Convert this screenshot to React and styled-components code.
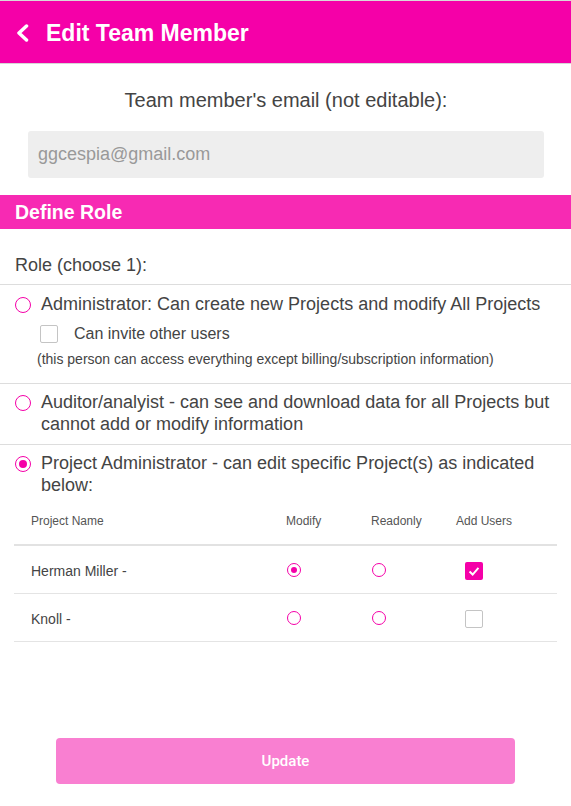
import React, { useState } from "react";
import styled, { createGlobalStyle } from "styled-components";

const GlobalStyle = createGlobalStyle`
  body {
    margin: 0;
    background: #fff;
    font-family: "Liberation Sans", Arial, sans-serif;
    color: #444;
  }
`;

const PINK = "#f500a8";

const projects = [
  { name: "Herman Miller -", access: "modify", addUsers: true },
  { name: "Knoll -", access: "none", addUsers: false }
];

export default function App() {
  const [role] = useState("project");

  return (
    <>
      <GlobalStyle />
      <Page>
        <TopEdge />
        <Header>
          <BackIcon viewBox="0 0 13 18">
            <path d="M10.5 2 L3 9 L10.5 16" />
          </BackIcon>
          <Title>Edit Team Member</Title>
        </Header>

        <EmailSection>
          <EmailLabel>Team member's email (not editable):</EmailLabel>
          <EmailBox>ggcespia@gmail.com</EmailBox>
        </EmailSection>

        <SectionBar>Define Role</SectionBar>

        <RoleIntro>Role (choose 1):</RoleIntro>

        <RoleBlock top="8px" bottom="16px">
          <RoleRow>
            <Radio checked={role === "admin"} />
            <RoleText>
              Administrator: Can create new Projects and modify All Projects
            </RoleText>
          </RoleRow>
          <InviteRow>
            <Checkbox />
            <span>Can invite other users</span>
          </InviteRow>
          <Note>
            (this person can access everything except billing/subscription
            information)
          </Note>
        </RoleBlock>

        <RoleBlock top="7px" bottom="9px">
          <RoleRow>
            <Radio checked={role === "auditor"} />
            <RoleText>
              Auditor/analyist - can see and download data for all Projects but
              cannot add or modify information
            </RoleText>
          </RoleRow>
        </RoleBlock>

        <RoleBlock top="7px" last>
          <RoleRow>
            <Radio checked={role === "project"} />
            <RoleText>
              Project Administrator - can edit specific Project(s) as indicated
              below:
            </RoleText>
          </RoleRow>

          <Table>
            <HeadRow>
              <HeadCell>Project Name</HeadCell>
              <HeadCell>Modify</HeadCell>
              <HeadCell>Readonly</HeadCell>
              <HeadCell>Add Users</HeadCell>
            </HeadRow>
            {projects.map((p) => (
              <BodyRow key={p.name}>
                <NameCell>{p.name}</NameCell>
                <IconCell>
                  <Radio small checked={p.access === "modify"} />
                </IconCell>
                <IconCell>
                  <Radio small checked={p.access === "readonly"} />
                </IconCell>
                <IconCell indent="9px">
                  <Checkbox checked={p.addUsers}>
                    {p.addUsers && (
                      <svg viewBox="0 0 18 18" width="16" height="16">
                        <path
                          d="M4 9.5 L7.5 13 L14 5.5"
                          fill="none"
                          stroke="#fff"
                          strokeWidth="2.2"
                        />
                      </svg>
                    )}
                  </Checkbox>
                </IconCell>
              </BodyRow>
            ))}
          </Table>
        </RoleBlock>

        <Footer>
          <UpdateButton>Update</UpdateButton>
        </Footer>
      </Page>
    </>
  );
}

const Page = styled.div`
  width: 571px;
  min-height: 806px;
  display: flex;
  flex-direction: column;
`;

const TopEdge = styled.div`
  height: 1px;
  background: #d8d8d8;
`;

const Header = styled.div`
  height: 63px;
  background: ${PINK};
  border-bottom: 1px solid #d6d6d6;
  display: flex;
  align-items: center;
  padding: 3px 16px 0;
  gap: 17px;
  box-sizing: border-box;
`;

const BackIcon = styled.svg`
  width: 13px;
  height: 18px;
  margin-top: -2px;
  path {
    fill: none;
    stroke: #fff;
    stroke-width: 3.5;
    stroke-linecap: round;
    stroke-linejoin: round;
  }
`;

const Title = styled.h1`
  margin: 0;
  color: #fff;
  font-size: 23px;
  font-weight: 700;
`;

const EmailSection = styled.div`
  padding: 25px 27px 17px 28px;
  display: flex;
  flex-direction: column;
`;

const EmailLabel = styled.div`
  text-align: center;
  font-size: 20px;
  line-height: 23px;
  color: #444;
  margin-bottom: 19px;
`;

const EmailBox = styled.div`
  height: 47px;
  background: #eeeeee;
  border-radius: 3px;
  display: flex;
  align-items: center;
  padding-left: 10px;
  font-size: 18px;
  color: #999;
`;

const SectionBar = styled.div`
  height: 34px;
  background: #f72ab3;
  color: #fff;
  font-size: 19.5px;
  font-weight: 700;
  display: flex;
  align-items: center;
  padding-left: 15px;
`;

const RoleIntro = styled.div`
  font-size: 18px;
  line-height: 22px;
  color: #444;
  padding: 25px 15px 8px;
  border-bottom: 1px solid #ddd;
`;

const RoleBlock = styled.div`
  padding: ${(p) => p.top} 14px ${(p) => (p.last ? "0" : p.bottom)} 15px;
  border-bottom: ${(p) => (p.last ? "none" : "1px solid #ddd")};
`;

const RoleRow = styled.div`
  display: flex;
  align-items: flex-start;
  gap: 10px;
`;

const RoleText = styled.div`
  font-size: 18px;
  line-height: 22px;
  color: #444;
`;

const Radio = styled.span`
  flex: none;
  box-sizing: border-box;
  width: ${(p) => (p.small ? "14px" : "16px")};
  height: ${(p) => (p.small ? "14px" : "16px")};
  margin-top: ${(p) => (p.small ? "0" : "4px")};
  border-radius: 50%;
  border: 1.5px solid ${PINK};
  display: inline-flex;
  align-items: center;
  justify-content: center;
  &::after {
    content: "";
    display: ${(p) => (p.checked ? "block" : "none")};
    width: ${(p) => (p.small ? "6px" : "8px")};
    height: ${(p) => (p.small ? "6px" : "8px")};
    border-radius: 50%;
    background: ${PINK};
  }
`;

const InviteRow = styled.div`
  display: flex;
  align-items: center;
  gap: 16px;
  padding: 10px 0 0 25px;
  font-size: 16px;
  line-height: 18px;
  color: #444;
`;

const Checkbox = styled.span`
  flex: none;
  box-sizing: border-box;
  width: 18px;
  height: 18px;
  border-radius: 2px;
  border: ${(p) => (p.checked ? "none" : "1.5px solid #c4c4c4")};
  background: ${(p) => (p.checked ? PINK : "#fff")};
  display: inline-flex;
  align-items: center;
  justify-content: center;
`;

const Note = styled.div`
  font-size: 14px;
  line-height: 16px;
  color: #444;
  padding: 8px 0 0 22px;
`;

const Table = styled.div`
  margin: 18px 0 0 -1px;
  width: 543px;
`;

const columns = "255px 85px 85px 1fr";

const HeadRow = styled.div`
  display: grid;
  grid-template-columns: ${columns};
  padding: 0 0 16px 17px;
  line-height: 14px;
  border-bottom: 2px solid #e2e2e2;
`;

const HeadCell = styled.div`
  font-size: 12px;
  color: #555;
`;

const BodyRow = styled.div`
  display: grid;
  grid-template-columns: ${columns};
  align-items: center;
  height: 47px;
  padding-left: 17px;
  border-bottom: 1px solid #e4e4e4;
`;

const NameCell = styled.div`
  font-size: 14px;
  color: #444;
  padding-top: 3px;
`;

const IconCell = styled.div`
  display: flex;
  padding-left: ${(p) => p.indent || "1px"};
  padding-top: ${(p) => (p.indent ? "3px" : "0")};
`;

const Footer = styled.div`
  margin-top: auto;
  padding: 0 56px 22px;
`;

const UpdateButton = styled.button`
  width: 100%;
  height: 46px;
  border: none;
  border-radius: 4px;
  background: #f97fd1;
  color: #fff;
  font-family: Roboto, "Liberation Sans", sans-serif;
  font-size: 15px;
  font-weight: 500;
`;
